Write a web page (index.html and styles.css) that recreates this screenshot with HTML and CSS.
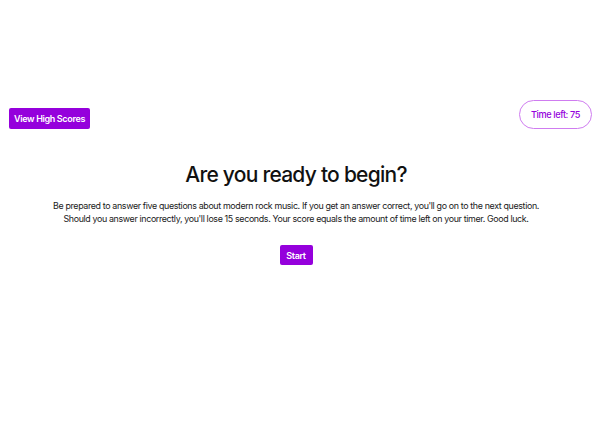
FILE: index.html
```html
<!DOCTYPE html>
<html lang="en">
<head>
<meta charset="utf-8">
<title>Quiz</title>
<link rel="stylesheet" href="styles.css">
</head>
<body>
<header class="top">
  <button class="btn btn-scores">View High Scores</button>
  <div class="timer">Time left: 75</div>
</header>
<main class="intro">
  <h1 class="title">Are you ready to begin?</h1>
  <p class="desc">Be prepared to answer five questions about modern rock music. If you get an answer correct, you'll go on to the next question.<br>Should you answer incorrectly, you'll lose 15 seconds. Your score equals the amount of time left on your timer. Good luck.</p>
  <button class="btn btn-start">Start</button>
</main>
</body>
</html>
```
FILE: styles.css
```css
* { box-sizing: border-box; }
html, body { margin: 0; padding: 0; background: #fff; }
body {
  font-family: Inter, "Noto Sans", sans-serif;
  color: #111;
  width: 600px;
  height: 428px;
}
.top {
  display: flex;
  justify-content: space-between;
  align-items: center;
  padding: 100px 8px 0 9px;
}
.btn {
  background: #9500dc;
  color: #fff;
  border: none;
  border-radius: 2px;
  font-family: Inter, "Noto Sans", sans-serif;
  font-weight: 600;
  font-size: 9px;
  letter-spacing: -0.35px;
  cursor: pointer;
}
.btn-scores {
  width: 81px;
  height: 21px;
  padding: 0;
  margin-top: 7px;
}
.timer {
  width: 73px;
  height: 29px;
  border: 1.5px solid #cf7cf0;
  border-radius: 15px;
  color: #9500dc;
  font-size: 9.2px;
  font-weight: 500;
  letter-spacing: -0.4px;
  display: flex;
  align-items: center;
  justify-content: center;
}
.intro {
  display: flex;
  flex-direction: column;
  align-items: center;
  text-align: center;
  width: 592px;
}
.title {
  font-size: 21px;
  font-weight: 500;
  margin: 32px 0 0;
  line-height: 27px;
  letter-spacing: -0.75px;
}
.desc {
  font-size: 8.9px;
  line-height: 13px;
  margin: 11px 0 0;
  color: #1a1a1a;
  letter-spacing: -0.36px;
}
.btn-start {
  width: 33px;
  height: 20px;
  padding: 0;
  margin-top: 20px;
}
```
